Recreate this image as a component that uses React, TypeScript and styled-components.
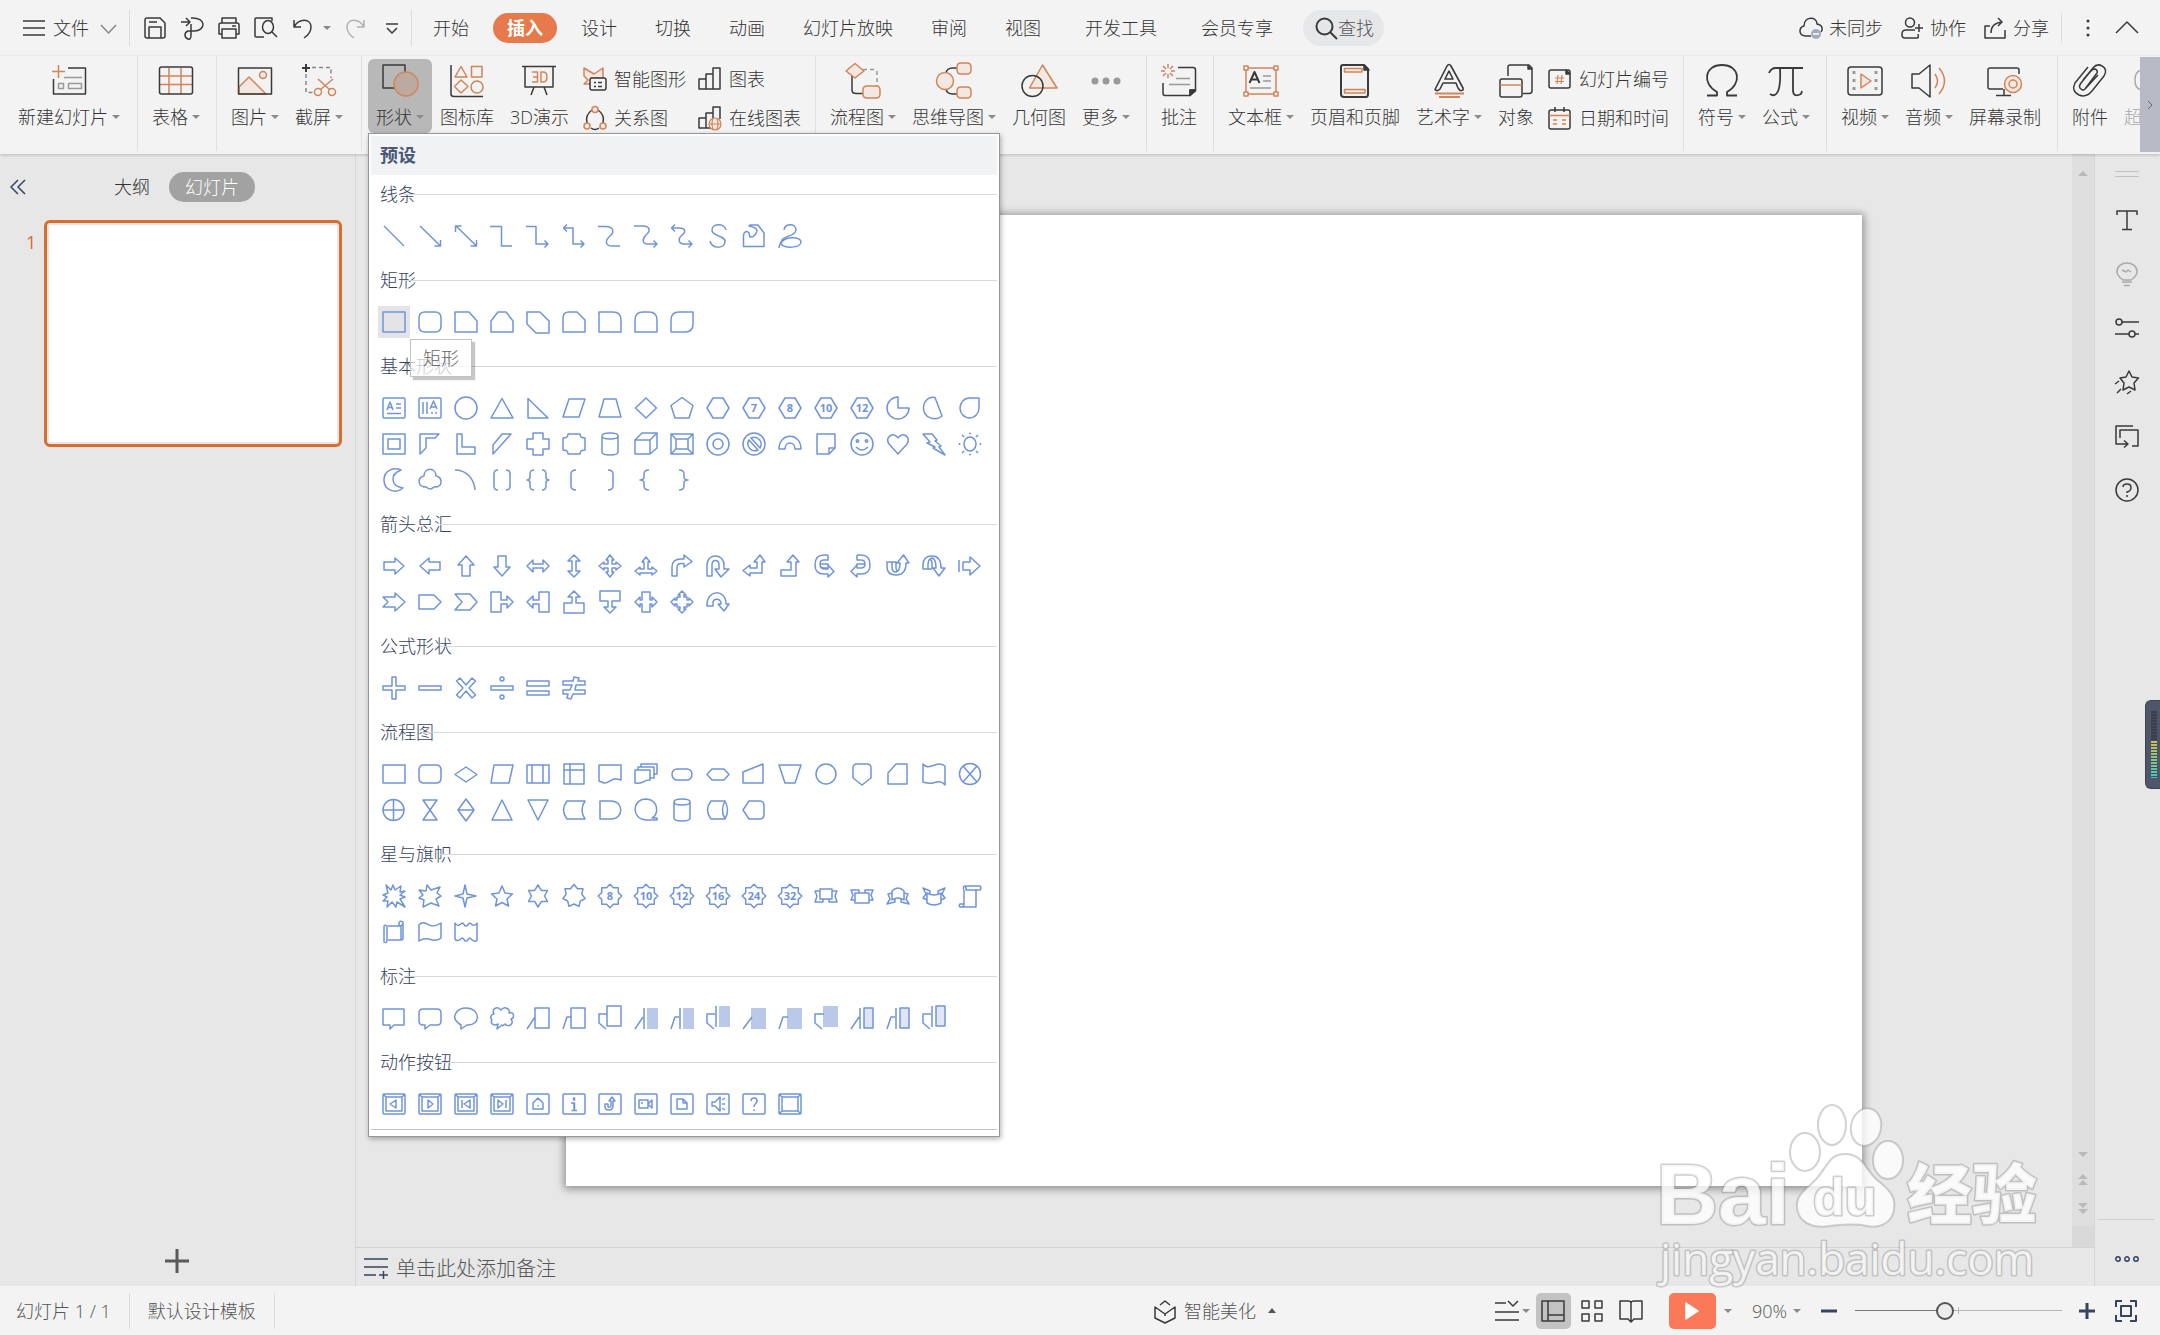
import React from "react";
import styled, { createGlobalStyle, css } from "styled-components";

const INK = "#3a3a3a";
const ORANGE = "#d0855a";
const BLUSH = "#f2e7e1";
const NAVY = "#36445f";
const BLUE = "#7094d8";
const PALE = "#bac9ea";

const GlobalStyle = createGlobalStyle`
  *, *::before, *::after { box-sizing: border-box; }
  body {
    margin: 0;
    background: #e7e7e7;
    font-family: "Open Sans", "Noto Sans CJK SC", sans-serif;
    font-size: 18px;
    font-weight: 300;
    line-height: 24px;
    color: #333;
  }
  button, input { font: inherit; color: inherit; }
  svg { display: block; flex: none; overflow: visible; }
`;

const Page = styled.div`
  display: flex;
  flex-direction: column;
  min-height: 100vh;
  position: relative;
  overflow: hidden;
`;

const Plain = styled.button`
  display: flex;
  align-items: center;
  flex: none;
  padding: 0;
  border: 0;
  background: none;
  white-space: nowrap;
  cursor: pointer;
`;

/* ---------- title and tab row ---------- */

const TopBar = styled.nav`
  display: flex;
  align-items: center;
  height: 56px;
  padding: 0 20px 0 23px;
  background: #f3f3f3;
`;

const FileButton = styled(Plain)`
  gap: 8px;
  margin-right: 13px;
  svg:last-child { margin-left: 4px; }
`;

const Rule = styled.span<{ $h: number }>`
  flex: none;
  width: 1px;
  height: ${(p) => p.$h}px;
  background: #dcdcdc;
`;

const QuickBar = styled.div`
  display: flex;
  padding: 0 4px 0 6px;
`;

const Quick = styled(Plain)<{ $w?: number; $faded?: boolean }>`
  justify-content: center;
  width: ${(p) => p.$w ?? 37}px;
  height: 32px;
  opacity: ${(p) => (p.$faded ? 0.35 : 1)};
`;

const Tabs = styled.div`
  display: flex;
  align-items: center;
  gap: 10px;
  padding-left: 7px;
`;

const Tab = styled(Plain)<{ $active?: boolean; $wide?: boolean }>`
  height: 30px;
  padding: 0 14px;
  margin-left: ${(p) => (p.$wide ? 6 : 0)}px;
  border-radius: 15px;
  ${(p) =>
    p.$active &&
    css`
      background: #e67a4c;
      color: #fff;
      font-weight: 700;
    `}
`;

const Search = styled(Plain)`
  height: 36px;
  padding: 0 10px 0 12px;
  margin-left: 6px;
  border-radius: 18px;
  background: #e5e7e9;
  color: #555;
`;

const Account = styled.div`
  display: flex;
  align-items: center;
  gap: 17px;
  margin: 0 12px 0 auto;
`;

const AccountButton = styled(Plain)`
  gap: 6px;
`;

/* ---------- ribbon ---------- */

const Ribbon = styled.div`
  display: flex;
  height: 98px;
  background: #f3f3f3;
  box-shadow: 0 1px 3px rgba(0, 0, 0, 0.2);
  position: relative;
  z-index: 2;
`;

const Group = styled.div<{ $l?: number; $r?: number }>`
  display: flex;
  flex: none;
  align-items: flex-start;
  height: 95px;
  padding: 3px ${(p) => p.$r ?? 8}px 0 ${(p) => p.$l ?? 6}px;
  border-right: 1px solid #e0e0e0;
`;

const LastGroup = styled(Group)`
  flex: 1 1 0;
  min-width: 0;
  overflow: hidden;
  border-right: 0;
`;

const ToolButton = styled(Plain)<{ $pressed?: boolean; $faded?: boolean }>`
  flex-direction: column;
  gap: 7px;
  height: 74px;
  padding: 3px 8px 0;
  border-radius: 6px;
  background: ${(p) => (p.$pressed ? "#b8b8b8" : "none")};
  opacity: ${(p) => (p.$faded ? 0.4 : 1)};
`;

const Label = styled.span`
  display: flex;
  align-items: center;
  gap: 4px;
`;

const Caret = styled.i<{ $up?: boolean }>`
  width: 0;
  height: 0;
  border: 4px solid transparent;
  ${(p) =>
    p.$up
      ? "border-bottom: 5px solid #555; border-top: 0;"
      : "border-top: 4px solid #8a8a8a; border-bottom: 0;"}
`;

const SmallColumn = styled.div`
  display: flex;
  flex-direction: column;
`;

const SmallTool = styled(Plain)`
  gap: 7px;
  height: 39px;
  padding: 0 6px;
`;

const RibbonScroll = styled(Plain)`
  justify-content: center;
  width: 20px;
  height: 95px;
  margin-top: 1px;
  background: #b7bac4;
`;

/* ---------- shape gallery ---------- */

const MenuAnchor = styled.div`
  position: relative;
`;

const Gallery = styled.div`
  position: absolute;
  top: 100%;
  left: 0;
  width: 632px;
  padding: 2px 2px 6px;
  border: 1px solid #979797;
  background: #fff;
  box-shadow: 1px 2px 5px rgba(0, 0, 0, 0.3);
  color: #35435f;
`;

const GalleryTitle = styled.div`
  height: 39px;
  padding-left: 9px;
  background: #f1f2f4;
  color: #4a5878;
  font-weight: 700;
  line-height: 39px;
`;

const GalleryBody = styled.div`
  border-bottom: 1px solid #c4c4c4;
`;

const Section = styled.section`
  padding-bottom: 7px;
`;

const SectionHead = styled.h3`
  display: flex;
  align-items: center;
  height: 38px;
  margin: 0 0 5px;
  padding-left: 9px;
  font-size: 18px;
  font-weight: 300;
  &::after {
    content: "";
    flex: 1;
    height: 1px;
    margin-left: -12px;
    background: #d8d8d8;
  }
`;

const ShapeGrid = styled.div`
  display: grid;
  grid-template-columns: repeat(17, 32px);
  gap: 4px;
  padding: 2px 7px;
`;

const ShapeCell = styled(Plain)<{ $hover?: boolean }>`
  justify-content: center;
  width: 32px;
  height: 32px;
  background: ${(p) => (p.$hover ? "#e4e4e6" : "none")};
  position: relative;
`;

const Tooltip = styled.span`
  position: absolute;
  top: 33px;
  left: 32px;
  z-index: 1;
  padding: 6px 12px;
  border: 1px solid #c2c2c2;
  background: rgba(255, 255, 255, 0.72);
  box-shadow: 3px 3px 1px rgba(0, 0, 0, 0.22);
  color: #666;
`;

/* ---------- work area ---------- */

const Workspace = styled.main`
  display: flex;
  flex: 1;
  min-height: 0;
`;

const Outline = styled.aside`
  display: flex;
  flex-direction: column;
  flex: none;
  width: 356px;
  border-right: 1px solid #d6d6d6;
`;

const OutlineHead = styled.div`
  display: flex;
  align-items: center;
  padding: 18px 0 18px 9px;
`;

const OutlineTab = styled(Plain)<{ $active?: boolean; $push?: number }>`
  height: 30px;
  margin-left: ${(p) => p.$push ?? 0}px;
  padding: 0 16px;
  border-radius: 15px;
  ${(p) => p.$active && "background: #a2a2a2; color: #fff;"}
`;

const ThumbRow = styled.div`
  display: flex;
  gap: 8px;
  padding: 0 13px 0 26px;
  color: #d86d2c;
  font-weight: 400;
`;

const ThumbNumber = styled.span`
  width: 10px;
  padding-top: 10px;
`;

const Thumb = styled.button`
  flex: 1;
  aspect-ratio: 298 / 227;
  padding: 2px;
  border: 3px solid #d86d2c;
  border-radius: 6px;
  background: #fff content-box;
`;

const AddSlide = styled(Plain)`
  justify-content: center;
  height: 48px;
  margin: auto 2px 1px 0;
`;

const Stage = styled.section`
  display: flex;
  flex-direction: column;
  flex: 1;
  min-width: 0;
`;

const CanvasRow = styled.div`
  display: flex;
  flex: 1;
`;

const Canvas = styled.div`
  display: flex;
  flex: 1;
  align-items: center;
  justify-content: center;
`;

const Slide = styled.div`
  width: 75.5%;
  aspect-ratio: 4 / 3;
  background: #fff;
  box-shadow: 0 1px 8px 2px rgba(0, 0, 0, 0.38);
`;

const ScrollTrack = styled.div`
  display: flex;
  flex-direction: column;
  align-items: center;
  flex: none;
  width: 22px;
  padding: 17px 0 0;
  background: #dedede;
  svg:nth-child(2) { margin-top: auto; }
`;

const TrackEnd = styled.div`
  width: 100%;
  height: 21px;
  margin-top: 12px;
  background: #d9d9d9;
`;

const NotesBar = styled.label`
  display: flex;
  align-items: center;
  gap: 8px;
  height: 39px;
  padding: 4px 8px 0;
  border-top: 1px solid #d2d2d2;
  font-size: 20px;
`;

const NotesInput = styled.input`
  flex: 1;
  min-width: 0;
  padding: 0;
  border: 0;
  background: none;
  outline: 0;
  &::placeholder { color: #555; opacity: 1; }
`;

const SidePanel = styled.aside`
  display: flex;
  flex-direction: column;
  align-items: center;
  flex: none;
  width: 66px;
  padding: 17px 5px 14px 3px;
  border-left: 1px solid #d6d6d6;
`;

const SideButton = styled(Plain)`
  justify-content: center;
  width: 40px;
  height: 54px;
`;

const SideGrip = styled.div`
  width: 24px;
  height: 6px;
  margin-bottom: 16px;
  border: solid #c0c0c0;
  border-width: 1px 0;
`;

const SideMore = styled(Plain)`
  justify-content: center;
  width: 100%;
  height: 53px;
  margin-top: auto;
  padding-top: 26px;
  border-top: 1px solid #d0d0d0;
`;

/* ---------- status bar ---------- */

const StatusBar = styled.footer`
  display: flex;
  align-items: center;
  height: 49px;
  padding: 0 10px 0 16px;
  background: #f3f3f3;
  color: #555;
`;

const StatusLeft = styled.div`
  display: flex;
  align-items: center;
  gap: 18px;
  flex: 0 0 calc(50% + 71px);
`;

const Beautify = styled(Plain)`
  gap: 8px;
  i { margin-left: 4px; }
`;

const StatusRight = styled.div`
  display: flex;
  align-items: center;
  justify-content: flex-end;
  flex: 1;
`;

const ViewButton = styled(Plain)<{ $on?: boolean; $w?: number }>`
  justify-content: center;
  gap: 3px;
  width: ${(p) => p.$w ?? 39}px;
  height: 36px;
  border-radius: 5px;
  background: ${(p) => (p.$on ? "#c3c3c3" : "none")};
`;

const Play = styled(Plain)`
  justify-content: center;
  width: 47px;
  height: 36px;
  margin-left: 20px;
  border-radius: 5px;
  background: #fb7958;
`;

const Percent = styled(Plain)`
  gap: 6px;
  margin: 0 12px 0 12px;
`;

const Slider = styled.input`
  appearance: none;
  width: 207px;
  height: 20px;
  margin: 0 10px;
  background:
    linear-gradient(90deg, #777 43%, #b5b5b5 43%) center / 100% 1px no-repeat,
    linear-gradient(#b5b5b5, #b5b5b5) 50% center / 1px 7px no-repeat;
  &::-webkit-slider-thumb {
    appearance: none;
    width: 18px;
    height: 18px;
    border: 2px solid #555;
    border-radius: 50%;
    background: #ececec;
  }
`;

/* ---------- overlays ---------- */

const LevelMeter = styled.div`
  position: absolute;
  right: 0;
  top: 700px;
  z-index: 3;
  width: 15px;
  height: 89px;
  padding: 10px 3px 10px 5px;
  border-radius: 6px 0 0 6px;
  background: #50566a;
  border: 1px solid #3f4454;
  border-right: 0;
`;

const LevelBars = styled.div`
  height: 100%;
  background:
    repeating-linear-gradient(transparent 0 2px, #454b5c 2px 3px),
    linear-gradient(#3a3f4d 0 44%, #d3c250 44%, #8fc47c 70%, #3fc8c0);
`;

const Watermark = styled.svg`
  position: absolute;
  right: 110px;
  bottom: 40px;
  z-index: 4;
  pointer-events: none;
  text {
    paint-order: stroke;
    stroke: rgba(130, 130, 130, 0.38);
    stroke-width: 3px;
    stroke-linejoin: round;
  }
`;

/* ---------- shape drawings ---------- */

type Glyph = { d: string; text?: string; soft?: string; solid?: string };

const pt = (r: number, a: number) =>
  `${(12 + r * Math.sin(a)).toFixed(1)} ${(12 - r * Math.cos(a)).toFixed(1)}`;
const star = (n: number, outer: number, inner: number) =>
  "M" +
  Array.from({ length: n * 2 }, (_, i) => pt(i % 2 ? inner : outer, (Math.PI * i) / n)).join("L") +
  "Z";
const circle = (x: number, y: number, r: number, ry = r) =>
  `M${x - r} ${y}a${r} ${ry} 0 1 0 ${2 * r} 0a${r} ${ry} 0 1 0 ${-2 * r} 0Z`;
const g = (d: string, text?: string): Glyph => ({ d, text });

const HEX = "M7 2H17L23 12 17 22H7L1 12Z";
const FRAME = "M2 2H22Q23 2 23 3V21Q23 22 22 22H2Q1 22 1 21V3Q1 2 2 2Z";
const BEVEL = FRAME + "M4 5H20V19H4ZM1 2L4 5M23 2L20 5";
const BADGE = star(8, 11.8, 9);

const callout = (kind: number, style: number): Glyph => {
  const tail = ["M1 23L9 11", "M1 23L5 11H9", "M8 23L1 17V8H9"][kind];
  const y = kind === 2 ? 0 : 2;
  if (style === 0) return g(`${tail}M9 ${y}H23V${y + 20}H9Z`);
  if (style === 1) return { d: `${tail}M10 ${y}V${y + 21}`, solid: `M13 ${y}H24V${y + 21}H13Z` };
  if (style === 2)
    return { d: ["M1 23L10 11", "M1 23L5 11H10", "M8 23L1 17V8H10"][kind], solid: `M9 ${y}H24V${y + 21}H9Z` };
  return { d: `${tail}M10 ${y}V${y + 21}M14 ${y}H23V${y + 20}H14Z`, soft: `M14 ${y}H23V${y + 20}H14Z` };
};

const SECTIONS: { name: string; shapes: Glyph[] }[] = [
  {
    name: "线条",
    shapes: [
      g("M2 2L22 22"),
      g("M2 2L22 21.5M22.5 16V22H16.5"),
      g("M2 2L22 21.5M22.5 16V22H16.5M1.500 8V2H7.500"),
      g("M0 2.5H11.500V22H22"),
      g("M0 2.500H10V20H22M18.500 16.500L22 20 18.500 23.500"),
      g("M1 4H11V20H22M5 .5L1.500 4 5 7.500M18.500 16.500L22 20 18.500 23.500"),
      g("M0 2.500H8C15 2.500 17 8 12 12 6 17 8 22 14 22H22"),
      g("M0 2H9C16 2 17 7 12 11 8 15 8 20 14 20H23M19.500 16.500L23 20 19.500 23.500"),
      g("M1 4H9C16 4 16 9 12 11 8 14 8 20 14 20H22M5 .5L1.500 4 5 7.500M18.500 16.500L22 20 18.500 23.500"),
      g("M20 6C19-1 6-1 6 6 6 13 20 11 19 18 18 25 6 25 4 17"),
      g("M1.500 22.500V12C1.500 8 4 7 6 8 9 9 6 13 9 13 12 13 14 10 15 7 15 4 12 3 7 2L8 1H16L22 9V22.500Z"),
      g("M6 6C7-1 18-1 18 6 17 13 7 11 4 16 2 20 1 22 1 24M3 20C5 12 23 12 23 18 22 25 6 24 3 20"),
    ],
  },
  {
    name: "矩形",
    shapes: [
      g("M1 2H23V22H1Z"),
      g("M7 2H17Q23 2 23 8V16Q23 22 17 22H7Q1 22 1 16V8Q1 2 7 2Z"),
      g("M1 2H15L23 11V22H1Z"),
      g("M1 11L8 2H16L23 11V22H1Z"),
      g("M1 2H14L23 11V23H10L1 14Z"),
      g("M1 22V8Q1 2 7 2H15L23 10V22Z"),
      g("M1 2H15Q23 2 23 10V22H1Z"),
      g("M1 22V10Q1 2 9 2H15Q23 2 23 10V22Z"),
      g("M1 22V10Q1 2 9 2H23V14Q23 22 15 22Z"),
    ],
  },
  {
    name: "基本形状",
    shapes: [
      g(FRAME + "M5 14L8 6L11 14M6 11.500H10M14 8H19M14 12H19M5 17.500H19"),
      g(FRAME + "M5 6V18M9 6V18M12 13L15.500 5L19 13M13 11H18M14 16V18M18 16V18"),
      g(circle(12, 12, 11)),
      g("M12 2.500L23 22H1Z"),
      g("M2 2.500V22H22Z"),
      g("M7 3H23L17 21H1Z"),
      g("M6 3H18L23 21H1Z"),
      g("M12 2L22.500 12 12 22 1.500 12Z"),
      g("M12 1.500L23 9.500 19 22H5L1 9.500Z"),
      g(HEX),
      g(HEX, "7"),
      g(HEX, "8"),
      g(HEX, "10"),
      g(HEX, "12"),
      g("M12 1V12H23A11 11 0 1 1 12 1Z"),
      g("M13 1.500L20 20C14 25 1 23 1.500 11 2 4 8 0 13 1.500Z"),
      g("M21 2V12A9.500 10 0 1 1 11.500 2Z"),
      g("M1 2H23V22H1ZM6 7H18V17H6Z"),
      g("M2 2H21L17 6H8V16L2 22Z"),
      g("M3 2H8V15H21V22H3Z"),
      g("M12 2H21L3 22V13Z"),
      g("M7 1H17V7H23V17H17V23H7V17H1V7H7Z"),
      g("M6 2H18Q18 6 23 6V18Q18 18 18 22H6Q6 18 1 18V6Q6 6 6 2Z"),
      g("M4 4V20C4 24 20 24 20 20V4C20 0 4 0 4 4C4 8 20 8 20 4"),
      g("M1 8L8 1H23V16L16 22H1ZM1 8H16V22M16 8L23 1"),
      g("M1 2H23V22H1ZM6 7H18V17H6ZM1 2L6 7M23 2L18 7M23 22L18 17M1 22L6 17"),
      g(circle(12, 12, 11) + circle(12, 12, 5)),
      g(circle(12, 12, 11) + "M7 8L16 18A7 7 0 0 1 7 8ZM9 6L18 16A7 7 0 0 0 9 6Z"),
      g("M1 17C1 0 23 0 23 17H17C17 9 7 9 7 17Z"),
      g("M3 2H21V16L15 22H3ZM15 22V16H21"),
      g(circle(12, 12, 11) + circle(7.5, 9, 1.2) + circle(16.5, 9, 1.2) + "M6 15Q12 21 18 15"),
      g("M12 22L3 12C-2 5 8-1 12 6C16-1 26 5 21 12Z"),
      g("M1 2L10 2 15 8 13 9 19 14 17 15 23 23 11 16 13 15 5 11 8 10Z"),
      g(circle(12, 12, 6, 7) + "M11 1.500H13M11 22.500H13M1.500 11V13M22.500 11V13M4 3L6 5M20 3L18 5M4 21L6 19M20 21L18 19"),
      g("M19 2C8 6 8 18 21 20C14 26 2 23 2 12C2 2 12-1 19 2Z"),
      g("M6 8C6-1 18-1 18 8 24 9 25 17 19 19 15 18 15 21 12 21 9 21 9 18 6 19-1 17 0 9 6 8Z"),
      g("M1 2C12 2 20 10 21 22"),
      g("M8 2Q4 2 4 6V18Q4 22 8 22M16 2Q20 2 20 6V18Q20 22 16 22"),
      g("M8 2Q4 2 4 6V9Q4 12 1 12 4 12 4 15V18Q4 22 8 22M16 2Q20 2 20 6V9Q20 12 23 12 20 12 20 15V18Q20 22 16 22"),
      g("M14 2Q9 2 9 6V18Q9 22 14 22"),
      g("M10 2Q15 2 15 6V18Q15 22 10 22"),
      g("M15 2Q10 2 10 6V9Q10 12 6 12 10 12 10 15V18Q10 22 15 22"),
      g("M9 2Q14 2 14 6V9Q14 12 18 12 14 12 14 15V18Q14 22 9 22"),
    ],
  },
  {
    name: "箭头总汇",
    shapes: [
      g("M2 8H13V4L22 12 13 20V16H2Z"),
      g("M22 8H11V4L2 12 11 20V16H22Z"),
      g("M8 22V11H4L12 2 20 11H16V22Z"),
      g("M8 2V13H4L12 22 20 13H16V2Z"),
      g("M1 12L7 6V10H17V6L23 12 17 18V14H7V18Z"),
      g("M12 1L18 7H14V17H18L12 23 6 17H10V7H6Z"),
      g("M12 1L16 6H14V10H18V8L23 12 18 16V14H14V18H16L12 23 8 18H10V14H6V16L1 12 6 8V10H10V6H8Z"),
      g("M12 3L16 8H14V15H18V13L23 17 18 21V19H6V21L1 17 6 13V15H10V8H8Z"),
      g("M2 22V13Q2 5 11 5H14V1L22 7.500 14 13V9.500H11Q7 9.500 7 14V22Z"),
      g("M1 22V11C1-1 18-1 18 11V15H23L15 23 9 15H13V11C13 5 6 5 6 11V22Z"),
      g("M18 1L23 8H20V19H8V22L1 16.500 8 11V14H15V8H12Z"),
      g("M15 1L21 8H18V22H3V16H13V8H9Z"),
      g("M14 1V6H10Q6 6 6 10H14V14H10Q6 14 6 10M14 14V11L20 17.500 14 23V20H10Q1 20 1 11 1 1 10 1H14M6 10Q6 15 11 15H14V13"),
      g("M7 1V6H11Q15 6 15 10H7V14H11Q15 14 15 10M7 14V11L1 17.500 7 23V20H11Q20 20 20 11 20 1 11 1H7"),
      g("M1 8H6V13Q6 18 10 18 14 17 14 9H11L17.500 1 23 9H20Q20 21 10 21 1 21 1 13ZM6 8H10V13Q10 17 12 17"),
      g("M1 15V11Q1 2 10 2 19 2 19 14H23L17 22 11 14H14Q14 5 10 4 6 5 6 11V15ZM10 15V10Q10 6 8 5M6 15H10"),
      g("M1 6V18M5 8H12V3L22 12 12 21V16H5Z"),
      g("M1 7H13V3L23 12 13 21V17H1L6 12Z"),
      g("M1 5H16L23 12 16 19H1Z"),
      g("M1 4H16L23 12 16 20H1L8 12Z"),
      g("M1 2H11V10H17V6L23 12 17 18V14H11V22H1Z"),
      g("M23 2H13V10H7V6L1 12 7 18V14H13V22H23Z"),
      g("M2 23V13H10V7H6L12 1 18 7H14V13H22V23Z"),
      g("M2 1V11H10V17H6L12 23 18 17H14V11H22V1Z"),
      g("M8 2H16V10H18V7L23 12 18 17V14H16V22H8V14H6V17L1 12 6 7V10H8Z"),
      g("M12 1L16 5H14V7H17V10H19V8L23 12 19 16V14H17V17H14V19H16L12 23 8 19H10V17H7V14H5V16L1 12 5 8V10H7V7H10V5H8Z"),
      g("M1 15C1 -1 20-1 20 14H23L18 21 12 14H15C15 8 8 8 7 12V16H1Z"),
    ],
  },
  {
    name: "公式形状",
    shapes: [
      g("M10 1H14V10H23V14H14V23H10V14H1V10H10Z"),
      g("M1 10H23V14H1Z"),
      g("M6 2L12 9 18 2 21.500 5 15 12 21.500 19 18 22 12 15 6 22 2.500 19 9 12 2.500 5Z"),
      g("M1 10H23V14H1Z" + circle(12, 3, 2) + circle(12, 21, 2)),
      g("M1 5H23V10H1ZM1 15H23V19H1Z"),
      g("M1 5H11L12 1 17 2 16 5H23V9H14L13 14H23V18H11L9 23 5 22 6 18H1V14H8L10 9H1Z"),
    ],
  },
  {
    name: "流程图",
    shapes: [
      g("M1 3H23V21H1Z"),
      g("M6 3H18Q23 3 23 8V16Q23 21 18 21H6Q1 21 1 16V8Q1 3 6 3Z"),
      g("M12 5L23 12.500 12 20 1 12.500Z"),
      g("M4 3H23L19 21H1Z"),
      g("M1 3H23V21H1ZM6 3V21M17 3V21"),
      g("M2 2H22V22H2ZM8 2V22M2 8H22"),
      g("M1 3H23V18C13 14 12 22 6 21L1 19Z"),
      g("M1 8H16V18C10 17 10 23 1 21ZM4 8V5H20V16H16M7 5V2H23V12H20"),
      g("M7 7H17A5 5.500 0 0 1 17 18H7A5 5.500 0 0 1 7 7Z"),
      g("M6 7H18L23 12.500 18 18H6L1 12.500Z"),
      g("M1 10L21 2V21H1Z"),
      g("M1 3H23L17 21H7Z"),
      g(circle(12, 12, 10)),
      g("M7 2H17Q21 2 21 6V16L12 23 3 16V6Q3 2 7 2Z"),
      g("M10 2H21V22H2V11Z"),
      g("M1 2C5 7 9 4 13 3 17 1 20 2 23 4V23C19 18 15 20 11 21 7 22 4 21 1 20Z"),
      g(circle(12, 12, 10.5) + "M5 4L19 20M19 4L5 20"),
      g(circle(11.5, 12, 10.5) + "M11.500 1V23M1 12H22"),
      g("M5 2H19L5 22H19Z"),
      g("M12 1L20 12 12 23 4 12ZM4 12H20"),
      g("M12 2L22 22H2Z"),
      g("M2 2H22L12 22Z"),
      g("M5 3H23Q17 12 23 21H5Q-2 12 5 3Z"),
      g("M2 3H13C26 3 26 21 13 21H2Z"),
      g("M23 22H12C-3 21-2 1 12 1 25 2 25 17 18 20H23Z"),
      g("M4 4V20C4 24 20 24 20 20V4C20 0 4 0 4 4C4 8 20 8 20 4"),
      g("M5 3H19Q24 12 19 21H5Q-2 12 5 3ZM19 3Q14 12 19 21"),
      g("M7 3H18Q22 3 22 8V16Q22 21 18 21H7L1 12Z"),
    ],
  },
  {
    name: "星与旗帜",
    shapes: [
      g("M4 1L9 6 11 1 13 6 19 2 18 8 23 7 18 11 23 13 18 15 23 23 15 18 14 23 10 18 5 23 6 17 1 17 5 13 1 11 6 9Z"),
      g("M9 1L13 6 22 3 19 9 23 12 18 15 21 22 13 19 5 23 6 16 1 14 5 11 1 6 8 7Z"),
      g("M11 1L13 10 22 12 13 14 11 23 9 14 1 12 9 10Z"),
      g("M12 2L15 9 22.500 10 17 15 18.500 22 12 18.500 5.500 22 7 15 1.500 10 9 9Z"),
      g(star(6, 11, 6.5)),
      g(star(7, 11.5, 8)),
      ...["8", "10", "12", "16", "24", "32"].map((n) => g(BADGE, n)),
      g("M6 5H18V15H6ZM6 7H1L3 12 1 18H9V15M18 7H23L21 12 23 18H15V15"),
      g("M5 9H19V19H5ZM5 16H1L3 11 1 6H9V9M19 16H23L21 11 23 6H15V9"),
      g("M6 7Q12 1 18 7V16Q12 12 6 16ZM6 9L2 10 4 15 1 20 9 18V15M18 9L22 10 20 15 23 20 15 18V15"),
      g("M5 9Q12 13 19 9V19Q12 23 5 19ZM5 16L1 14 4 10 1 4 8 7V10M19 16L23 14 20 10 23 4 16 7V10"),
      g("M6 6V20H2Q0 23 3 23H18V6M6 6Q4 2 8 2H22Q24 4 22 6H8Q9 4 7 3M6 20Q6 23 3 23"),
      g("M6 6H19V20H6M2 7Q2 4 5 6V20Q5 24 2 22ZM6 6H17V3Q18 0 21 2V18Q21 20 19 20M17 6Q21 6 21 2"),
      g("M1 5C5 0 10 5 14 6 18 6 20 5 23 3V18C19 22 14 20 11 19 7 18 4 19 1 21Z"),
      g("M1 3C3 7 6 5 8 3 10 3 10 6 12 6 14 6 14 3 16 3 18 5 21 7 23 3V20C21 23 18 20 16 18 14 18 14 21 12 21 10 21 10 18 8 18 6 20 3 22 1 19Z"),
    ],
  },
  {
    name: "标注",
    shapes: [
      g("M1 3H22V19H12L8 23V19H1Z"),
      g("M5 3H19Q23 3 23 7V15Q23 19 19 19H12L7 23V19H5Q1 19 1 15V7Q1 3 5 3Z"),
      g("M7 23L7 19C-6 11 4 2 12 2 27 2 27 20 13 19Z"),
      g("M7 23L8 18C3 21 0 16 2 14-1 11 2 8 4 8 1 2 8 0 11 4 15-1 21 4 19 7 24 5 25 12 21 13 25 18 18 22 15 18 13 20 12 20 12 19Z"),
      ...[0, 1, 2, 3].flatMap((s) => [0, 1, 2].map((k) => callout(k, s))),
    ],
  },
  {
    name: "动作按钮",
    shapes: [
      g(BEVEL + "M14 8V16L8 12Z"),
      g(BEVEL + "M10 8V16L15 12Z"),
      g(BEVEL + "M16 8V16L10 12ZM8 8V16"),
      g(BEVEL + "M8 8V16L13 12ZM16 8V16"),
      g(FRAME + "M7 11L12 6 17 11V17H7ZM12 13V14.500"),
      g(FRAME + "M11.500 6H12.500V8H11.500ZM9 11H12.500V18M9.500 18.500H15M12 11V18"),
      g(FRAME + "M7 12Q6 18 11 18 15 18 15 13V9H17L14 5 11 9H13V13Q13 16 10 15V12Z"),
      g(FRAME + "M5 8H14V16H5ZM14 12L18 8V16L14 12M7 11H9"),
      g(FRAME + "M7 7H13L17 11V17H7ZM13 7V11H17"),
      g(FRAME + "M6 10H9L14 5V19L9 14H6ZM16 8L19 6M16 12H19M16 16L19 18"),
      g(FRAME + "M9 9C9 5 15 5 15 9 15 12 12 11 12 15M12 17.500V19"),
      g(FRAME + "M4 5H20V19H4ZM1 2L4 5M23 2L20 5M23 22L20 19M1 22L4 19"),
    ],
  },
];

function Shape({ glyph }: { glyph: Glyph }) {
  return (
    <svg width="24" height="24" viewBox="0 0 24 24" fill="none" stroke={BLUE} strokeWidth="1.5" strokeLinejoin="round">
      {glyph.solid && <path d={glyph.solid} fill={PALE} stroke="none" />}
      {glyph.soft && <path d={glyph.soft} fill="#dfe5f4" stroke="none" />}
      <path d={glyph.d} />
      {glyph.text && (
        <text x="12" y="16" fontSize="11" fontWeight="700" textAnchor="middle" fill={BLUE} stroke="none">
          {glyph.text}
        </text>
      )}
    </svg>
  );
}

/* ---------- interface icons ---------- */

type Stroke = { d: string; c?: string; f?: string; w?: number; dash?: string };

function Icon({ size, h, parts, w = 1.5 }: { size: number; h?: number; parts: Stroke[]; w?: number }) {
  return (
    <svg width={size} height={h ?? size} viewBox={`0 0 ${size} ${h ?? size}`} fill="none" strokeLinejoin="round" aria-hidden>
      {parts.map((p, i) => (
        <path key={i} d={p.d} stroke={p.c ?? INK} fill={p.f ?? "none"} strokeWidth={p.w ?? w} strokeDasharray={p.dash} />
      ))}
    </svg>
  );
}

const GREY = "#999";
const rr = (x: number, y: number, w: number, h: number, r: number) =>
  `M${x + r} ${y}h${w - 2 * r}q${r} 0 ${r} ${r}v${h - 2 * r}q0 ${r} ${-r} ${r}h${2 * r - w}q${-r} 0 ${-r} ${-r}v${2 * r - h}q0 ${-r} ${r} ${-r}Z`;

const BIG: Record<string, Stroke[]> = {
  新建幻灯片: [
    { d: "M17 6H34.500V32H2.500V17" },
    { d: "M7.500 3V16M1 9.500H14", c: ORANGE },
    { d: "M13 15.500H31", c: GREY },
    { d: "M7.500 21.500H12.500V26.500H7.500ZM17.500 21.500H30.500V26.500H17.500Z", c: GREY },
  ],
  表格: [
    { d: "M2 14H34M2 22.500H34M11 6V14M23 6V14M11 14V32M23 14V32", c: ORANGE },
    { d: rr(1.5, 5, 33, 27, 2) },
  ],
  图片: [
    { d: "M2 25L12 15 29 32H2Z", c: ORANGE, f: BLUSH },
    { d: circle(26, 13, 3.5), c: ORANGE, f: BLUSH },
    { d: "M1.500 6H34.500V32H1.500Z" },
  ],
  截屏: [
    { d: "M11 5.500H30V16M5 12V30.500H14", c: "#888", dash: "4 3" },
    { d: "M5 2V10M1 6H9", w: 2 },
    { d: "M17 17L29 28M32 17L19 28" + circle(17, 30, 3.5) + circle(31, 30, 3.5), c: ORANGE },
  ],
  形状: [
    { d: "M1 3H23V26H1Z" },
    { d: circle(24, 22, 12), c: ORANGE, f: "#bcaaa1" },
  ],
  图标库: [
    { d: "M2 3V32Q2 34.500 5 34.500H34" },
    { d: "M12 4.500L18 15H6ZM22.500 4.500H33V15H22.500ZM12 18L19 24.500 12 31 5.500 24.500Z" + circle(28, 25, 6), c: ORANGE },
  ],
  "3D演示": [
    { d: "M1 4.500H35M4 4.500V25H32V4.500M13 25L10 33M23 25L26 33" },
    { d: "M11 10H16.500V20H11M12 15H16.500M20 10H22Q26 10 26 15T22 20H20Z", c: ORANGE },
  ],
  流程图: [
    { d: "M7 14V28Q7 31.500 11 31.500H20" },
    { d: "M18 7.500H28Q32 7.500 32 11V24", c: GREY, dash: "4 3" },
    { d: "M10 1.500L19 9 10 16 1 9Z" + rr(18, 24, 17, 12, 4), c: ORANGE, f: BLUSH },
  ],
  思维导图: [
    { d: "M10 12Q10 6 17 6H22M10 26Q10 32 17 32H22" },
    { d: circle(9, 19, 8.5) + rr(21, 1, 14, 11, 4) + rr(21, 25, 14, 11, 4), c: ORANGE, f: BLUSH },
  ],
  几何图: [
    { d: "M21.500 3L36 26H8.500Z", c: ORANGE, f: BLUSH },
    { d: circle(11.5, 24, 10.5) },
  ],
  更多: [{ d: circle(7, 19, 3.5) + circle(18, 19, 3.5) + circle(29, 19, 3.5), c: "none", f: GREY }],
  批注: [
    { d: "M17 5.500H32Q34.500 5.500 34.500 8V29L29 33.500H4Q2 33.500 2 31V21M29 33V28H34" },
    { d: "M29 33.500V28H34.500Z", f: INK },
    { d: "M15 16.500H29M8 22.500H29", c: GREY },
    { d: "M7 2V6M7 12V16M0 9H4M10 9H14M2 4L5 7M12 4L9 7M2 14L5 11M12 14L9 11", c: ORANGE },
  ],
  文本框: [
    { d: "M3 6H33V32H3Z", c: ORANGE },
    { d: "M1 4H5V8H1ZM31 4H35V8H31ZM1 30H5V34H1ZM31 30H35V34H31Z", c: ORANGE, f: "#fff" },
    { d: "M6.500 21L11.500 10L16.500 21M8 17.500H15", w: 2 },
    { d: "M20 14H28M20 19H28M7 26H28", c: GREY },
  ],
  页眉和页脚: [
    { d: "M6 3H27L31 7V32Q31 35 29 35H7Q4 35 4 32V5Q4 3 6 3Z", w: 2 },
    { d: "M27 3V8H32Z", f: INK },
    { d: "M7.500 6.500H25V10H7.500ZM7.500 27.500H28V31H7.500Z", c: ORANGE, f: BLUSH },
  ],
  艺术字: [
    { d: "M16 4Q18 1 20 4L32 26Q33 29 29 28.500L27 26 25 21H12L9 27Q6 30 4 27.500ZM14 17H22L18 9Z", w: 1.6 },
    { d: "M4 31.500H33M8 35H29", c: ORANGE, w: 2 },
  ],
  对象: [
    { d: "M10 14V5Q10 3 12 3H31L34 6V29Q34 31.500 31 31.500H25" },
    { d: "M30 3V7H34", f: INK },
    { d: rr(2, 17, 22, 18, 2) },
    { d: "M2 23H24", c: ORANGE },
  ],
  符号: [{ d: "M3 33.500H13V30C-2 22 0 3 18 3S38 22 23 30V33.500H33", w: 1.8 }],
  公式: [{ d: "M1 11Q3 6 8 6H35M12 6Q13 26 9 31Q6 35 2 32M25 6V28Q25 36 33 32L34 29", w: 1.8 }],
  视频: [
    { d: rr(1, 5, 34, 28, 3) },
    { d: "M14 12L24 19 14 26Z", c: ORANGE, f: BLUSH },
    { d: "M7 9V30M29 9V30", c: GREY, w: 3, dash: "3 5" },
  ],
  音频: [
    { d: "M1 12H8L19 3V35L8 26H1Z" },
    { d: "M24 12Q29 19 24 26M28 6Q39 19 28 32", c: ORANGE },
  ],
  屏幕录制: [
    { d: "M16 27H3Q1 27 1 25V8Q1 6 3 6H30Q32 6 32 8V12M17 27V33M9 33.500H24" },
    { d: circle(26, 22, 8.5) + circle(26, 22, 4), c: ORANGE, f: BLUSH },
  ],
  附件: [
    { d: "M11 18L21 6Q25 1 30 4 36 7 32 14L20 29Q14 36 7 33-1 29 3 21L16 5M13 27L25 11Q26 8 23 7 20 7 18 10L9 21Q6 25 9 27 11 29 13 27L26 13" },
  ],
  超链接: [{ d: "M17 8H10Q2 8 2 18T10 28H17M19 8H26Q34 8 34 18T26 28H19M10 18H26" }],
};

const SMALL: Record<string, Stroke[]> = {
  智能图形: [
    { d: "M1 1L11 7 20 1V11H8V17H1L5 13 1 9Z", c: ORANGE, f: BLUSH },
    { d: rr(7, 11, 16, 12, 2), f: "#f3f3f3" },
    { d: "M11 15.500H13M15 15.500H19M11 19.500H13M15 19.500H19" },
  ],
  关系图: [
    { d: "M9 4Q2 9 4 17M15 4Q22 9 20 17M8 22Q12 25 16 22" },
    { d: circle(12, 3.500, 3) + circle(4, 20, 3) + circle(20, 20, 3), c: ORANGE, f: BLUSH },
  ],
  图表: [{ d: "M1 12H8V22H1ZM8 7H15V22H8ZM15 1H22V22H15Z" }],
  在线图表: [
    { d: "M1 12H8V22H1ZM8 7H15V22H8ZM15 13V1H22V13" },
    { d: circle(17, 18, 6) + circle(17, 18, 3, 6) + "M11 18H23", c: ORANGE, f: BLUSH, w: 1.2 },
  ],
  幻灯片编号: [
    { d: rr(1, 3, 21, 18, 2) },
    { d: "M18 3V7H22Z", f: INK },
    { d: "M10 8L9 17M14 8L13 17M7 11H16M7 14.500H16", c: ORANGE, w: 1.2 },
  ],
  日期和时间: [
    { d: rr(1, 4, 21, 19, 2) + "M7 1V6M16 1V6" },
    { d: "M1 9.500H22M5 14H9M14 14H18M5 18H9M14 18H18", c: ORANGE },
  ],
};

function Tool({ name, menu, pressed, faded }: { name: string; menu?: boolean; pressed?: boolean; faded?: boolean }) {
  return (
    <ToolButton type="button" $pressed={pressed} $faded={faded}>
      <Icon size={36} parts={BIG[name]} />
      <Label>
        {name}
        {menu && <Caret />}
      </Label>
    </ToolButton>
  );
}

function Small({ names }: { names: string[] }) {
  return (
    <SmallColumn>
      {names.map((n) => (
        <SmallTool type="button" key={n}>
          <Icon size={24} parts={SMALL[n]} />
          {n}
        </SmallTool>
      ))}
    </SmallColumn>
  );
}

function ShapeGallery() {
  return (
    <Gallery>
      <GalleryTitle>预设</GalleryTitle>
      <GalleryBody>
        {SECTIONS.map((s) => (
          <Section key={s.name}>
            <SectionHead>{s.name}</SectionHead>
            <ShapeGrid>
              {s.shapes.map((glyph, i) => {
                const hovered = s.name === "矩形" && i === 0;
                return (
                  <ShapeCell type="button" key={i} $hover={hovered}>
                    <Shape glyph={glyph} />
                    {hovered && <Tooltip role="tooltip">矩形</Tooltip>}
                  </ShapeCell>
                );
              })}
            </ShapeGrid>
          </Section>
        ))}
      </GalleryBody>
    </Gallery>
  );
}

const TABS = ["开始", "插入", "设计", "切换", "动画", "幻灯片放映", "审阅", "视图", "开发工具", "会员专享"];

function Header() {
  return (
    <TopBar>
      <FileButton type="button">
        <Icon size={22} parts={[{ d: "M0 4H22M0 11H22M0 18H22" }]} />
        文件
        <Icon size={15} parts={[{ d: "M0 4L7.500 12 15 4", c: "#888" }]} />
      </FileButton>
      <Rule $h={36} />
      <QuickBar>
        <Quick type="button" aria-label="保存">
          <Icon size={24} parts={[{ d: "M4 2H17L22 7V20Q22 22 20 22H4Q2 22 2 20V4Q2 2 4 2ZM6 22V11H18V22M6 6H14" }]} />
        </Quick>
        <Quick type="button" aria-label="输出">
          <Icon size={24} parts={[{ d: "M1 6H9M6 2L10 6 6 10M11 2C27 1 26 15 14 15H8Q5 16 5 19T8 23 11 19V8" }]} />
        </Quick>
        <Quick type="button" aria-label="打印">
          <Icon size={24} parts={[{ d: "M5 7V2H19V7M5 18H2V9Q2 7 4 7H20Q22 7 22 9V18H19M5 13H19V22H5ZM15 10H19" }]} />
        </Quick>
        <Quick type="button" aria-label="打印预览">
          <Icon size={24} parts={[{ d: "M10 21H2Q1 21 1 20V3Q1 2 2 2H18V5M18 16L23 21" + circle(14, 11, 5.500, 6.500) }]} />
        </Quick>
        <Quick type="button" aria-label="撤销">
          <Icon size={24} parts={[{ d: "M3 4V11H10M3 11C8 2 20 2 20 11 20 16 16 20 13 22" }]} />
        </Quick>
        <Quick type="button" aria-label="撤销列表" $w={12}>
          <Caret />
        </Quick>
        <Quick type="button" aria-label="恢复" $w={44} $faded>
          <Icon size={24} parts={[{ d: "M21 4V11H14M21 11C16 2 4 2 4 11 4 16 8 20 11 22" }]} />
        </Quick>
        <Quick type="button" aria-label="自定义" $w={30}>
          <Icon size={12} parts={[{ d: "M0 2H12M1 6L6 11 11 6" }]} />
        </Quick>
      </QuickBar>
      <Rule $h={36} />
      <Tabs>
        {TABS.map((t) => (
          <Tab type="button" key={t} $active={t === "插入"} $wide={t.length === 4}>
            {t}
          </Tab>
        ))}
        <Search type="button">
          <Icon size={23} w={2} parts={[{ d: circle(9.5, 9.5, 8) + "M15 15L22 22" }]} />
          查找
        </Search>
      </Tabs>
      <Account>
        <AccountButton type="button">
          <Icon
            size={24}
            parts={[
              { d: "M12 20H6C-1 19 0 11 5 10 5 0 18 0 18 8 24 9 24 14 22 16" },
              { d: circle(17, 18, 5), c: "none", f: "#a3aabc" },
              { d: "M14 18H20", c: "#fff" },
            ]}
          />
          未同步
        </AccountButton>
        <AccountButton type="button">
          <Icon size={24} parts={[{ d: circle(10, 6.500, 4.500) + "M15 14H6Q2 14 2 18V19Q2 22 5 22H17Q19 22 18 18M19 8V16M15 12H23" }]} />
          协作
        </AccountButton>
        <AccountButton type="button">
          <Icon size={24} parts={[{ d: "M7 10H2V22H22V14M8 17Q8 7 19 6M15 2L19 6 15 10" }]} />
          分享
        </AccountButton>
      </Account>
      <Rule $h={30} />
      <Quick type="button" aria-label="更多选项" $w={52}>
        <Icon size={20} parts={[{ d: circle(10, 3, 1.500) + circle(10, 10, 1.500) + circle(10, 17, 1.500), c: "none", f: INK }]} />
      </Quick>
      <Quick type="button" aria-label="收起功能区" $w={26}>
        <Icon size={22} parts={[{ d: "M0 16L11 5 22 16" }]} />
      </Quick>
    </TopBar>
  );
}

function Toolbar() {
  return (
    <Ribbon>
      <Group $l={10} $r={9}>
        <Tool name="新建幻灯片" menu />
      </Group>
      <Group>
        <Tool name="表格" menu />
      </Group>
      <Group $r={10}>
        <Tool name="图片" menu />
        <Tool name="截屏" menu />
      </Group>
      <Group>
        <MenuAnchor>
          <Tool name="形状" menu pressed />
          <ShapeGallery />
        </MenuAnchor>
        <Tool name="图标库" />
        <Tool name="3D演示" />
        <Small names={["智能图形", "关系图"]} />
        <Small names={["图表", "在线图表"]} />
      </Group>
      <Group>
        <Tool name="流程图" menu />
        <Tool name="思维导图" menu />
        <Tool name="几何图" />
        <Tool name="更多" menu />
      </Group>
      <Group>
        <Tool name="批注" />
      </Group>
      <Group>
        <Tool name="文本框" menu />
        <Tool name="页眉和页脚" />
        <Tool name="艺术字" menu />
        <Tool name="对象" />
        <Small names={["幻灯片编号", "日期和时间"]} />
      </Group>
      <Group>
        <Tool name="符号" menu />
        <Tool name="公式" menu />
      </Group>
      <Group>
        <Tool name="视频" menu />
        <Tool name="音频" menu />
        <Tool name="屏幕录制" />
      </Group>
      <LastGroup $r={0}>
        <Tool name="附件" />
        <Tool name="超链接" faded />
      </LastGroup>
      <RibbonScroll type="button" aria-label="向右滚动">
        <Icon size={8} parts={[{ d: "M2 0L6 4 2 8", c: "#666", w: 1 }]} />
      </RibbonScroll>
    </Ribbon>
  );
}

const SIDE: { name: string; parts: Stroke[] }[] = [
  { name: "文字", parts: [{ d: "M2 7V3H22V7M12 3V21M7 21.500H17" }] },
  { name: "灵感", parts: [{ d: "M8 18Q2 14 2 9.500C2-2 22-2 22 9.500Q22 14 16 18ZM7 20H17M9 23.500H15M7 8L11 10 13 8 16 10", c: "#aaa" }] },
  { name: "属性", parts: [{ d: "M7 6H24" + circle(4, 6, 3) + "M0 18H14M20 18H24" + circle(17, 18, 3) }] },
  { name: "动画", parts: [{ d: "M14 1L17 7 23.500 8 19 13 20 20 14 17 8 20 9 13 5 8 11 7ZM0 14L4 11M2 23L6 19M12 24L16 21" }] },
  { name: "切换", parts: [{ d: "M18 2H1V20H13M9 16.500L13 20 9 23.500M5 14V6H23V22H17" }] },
  { name: "帮助", parts: [{ d: circle(12, 12, 11) + "M8 9Q8 6 12 6T16 9.500 12 14V15M12 17V19" }] },
];

export default function App() {
  return (
    <Page>
      <GlobalStyle />
      <Header />
      <Toolbar />
      <Workspace>
        <Outline>
          <OutlineHead>
            <Plain type="button" aria-label="收起">
              <Icon size={18} parts={[{ d: "M9 2L2 9 9 16M16 2L9 9 16 16", c: NAVY }]} />
            </Plain>
            <OutlineTab type="button" $push={71}>
              大纲
            </OutlineTab>
            <OutlineTab type="button" $active $push={3}>
              幻灯片
            </OutlineTab>
          </OutlineHead>
          <ThumbRow>
            <ThumbNumber>1</ThumbNumber>
            <Thumb type="button" aria-label="幻灯片 1" />
          </ThumbRow>
          <AddSlide type="button" aria-label="新建幻灯片">
            <Icon size={24} w={3} parts={[{ d: "M12 0V24M0 12H24", c: "#5a5a5a" }]} />
          </AddSlide>
        </Outline>
        <Stage>
          <CanvasRow>
            <Canvas>
              <Slide />
            </Canvas>
            <ScrollTrack>
              <Icon size={10} h={5} parts={[{ d: "M0 5L5 0 10 5Z", c: "none", f: "#b9b9b9" }]} />
              <Icon
                size={10}
                h={62}
                parts={[{ d: "M0 0H10L5 5ZM0 27L5 22 10 27ZM0 33L5 28 10 33ZM0 51H10L5 56ZM0 57H10L5 62Z", c: "none", f: "#b9b9b9" }]}
              />
              <TrackEnd />
            </ScrollTrack>
          </CanvasRow>
          <NotesBar>
            <Icon size={24} parts={[{ d: "M0 2H24M0 10H24M0 18H12M15 18H24M19.500 14V22", c: NAVY }]} />
            <NotesInput aria-label="备注" placeholder="单击此处添加备注" />
          </NotesBar>
        </Stage>
        <SidePanel>
          <SideGrip />
          {SIDE.map((s) => (
            <SideButton type="button" key={s.name} aria-label={s.name}>
              <Icon size={24} parts={s.parts} />
            </SideButton>
          ))}
          <SideMore type="button" aria-label="更多">
            <Icon size={24} h={8} parts={[{ d: circle(3, 4, 2.200) + circle(12, 4, 2.200) + circle(21, 4, 2.200), c: NAVY }]} />
          </SideMore>
        </SidePanel>
      </Workspace>
      <StatusBar>
        <StatusLeft>
          <span>幻灯片 1 / 1</span>
          <Rule $h={36} />
          <span>默认设计模板</span>
          <Rule $h={36} />
        </StatusLeft>
        <Beautify type="button">
          <Icon size={22} parts={[{ d: "M6 5L11 1 16 5M1 7L11 14 21 7V18L11 23 1 18ZM11 14V16" }]} />
          智能美化
          <Caret $up />
        </Beautify>
        <StatusRight>
          <ViewButton type="button" aria-label="备注视图" $w={47}>
            <Icon size={24} parts={[{ d: "M0 4H11M13 2L18 7 23 2M0 13H24M0 21H24" }]} />
            <Caret />
          </ViewButton>
          <ViewButton type="button" aria-label="普通视图" $on $w={35}>
            <Icon size={24} parts={[{ d: "M1 2H23V22H1ZM7 2V22M7 16H23" }]} />
          </ViewButton>
          <ViewButton type="button" aria-label="浏览视图" $w={43}>
            <Icon size={24} parts={[{ d: "M2 2H9V9H2ZM15 2H22V9H15ZM2 15H9V22H2ZM15 15H22V22H15Z" }]} />
          </ViewButton>
          <ViewButton type="button" aria-label="阅读视图" $w={35}>
            <Icon size={24} parts={[{ d: "M12 4Q12 2 9 2H1V20H9L12 23 15 20H23V2H15Q12 2 12 4V22" }]} />
          </ViewButton>
          <Play type="button" aria-label="播放">
            <Icon size={16} h={18} parts={[{ d: "M2 1L14 9 2 17Z", c: "#fff", f: "#fff" }]} />
          </Play>
          <Quick type="button" aria-label="播放选项" $w={24}>
            <Caret />
          </Quick>
          <Percent type="button">
            90%
            <Caret />
          </Percent>
          <Quick type="button" aria-label="缩小" $w={32}>
            <Icon size={16} w={3} parts={[{ d: "M0 8H16", c: NAVY }]} />
          </Quick>
          <Slider type="range" aria-label="缩放" min={0} max={100} defaultValue={43} />
          <Quick type="button" aria-label="放大" $w={30}>
            <Icon size={16} w={3} parts={[{ d: "M0 8H16M8 0V16", c: NAVY }]} />
          </Quick>
          <Quick type="button" aria-label="适应窗口" $w={48}>
            <Icon size={22} w={2} parts={[{ d: "M1 7V1H7M15 1H21V7M21 15V21H15M7 21H1V15M6 6H16V16H6Z", c: NAVY }]} />
          </Quick>
        </StatusRight>
      </StatusBar>
      <LevelMeter>
        <LevelBars />
      </LevelMeter>
      <Watermark width="400" height="200" viewBox="0 0 400 200" fill="rgba(255,255,255,0.78)">
        <g stroke="rgba(130,130,130,0.36)" strokeWidth="2">
          <ellipse cx="155" cy="57" rx="15" ry="19" />
          <ellipse cx="182" cy="30" rx="14" ry="20" />
          <ellipse cx="216" cy="32" rx="15" ry="19" transform="rotate(12 216 32)" />
          <ellipse cx="238" cy="65" rx="15" ry="19" />
          <path d="M195 59C212 59 214 72 226 84 240 95 246 102 244 114 243 127 230 134 217 131 203 128 190 130 180 131 160 134 148 126 147 112 146 98 158 94 168 82 178 70 180 59 195 59Z" />
        </g>
        <text x="6" y="129" fontFamily="Liberation Sans" fontWeight="700" fontSize="86">
          Bai
        </text>
        <text x="163" y="120" fontFamily="Liberation Sans" fontWeight="700" fontSize="52">
          du
        </text>
        <text x="257" y="123" fontFamily="Noto Sans CJK SC" fontWeight="900" fontSize="65">
          经验
        </text>
        <text x="10" y="180" fontFamily="Open Sans" fontWeight="500" fontSize="44">
          jingyan.baidu.com
        </text>
      </Watermark>
    </Page>
  );
}
